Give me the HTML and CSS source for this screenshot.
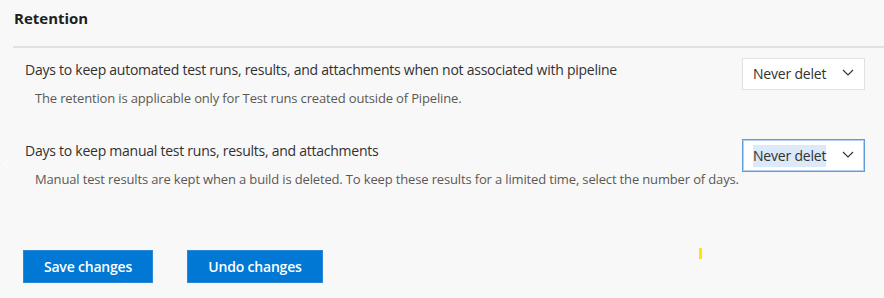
FILE: index.html
```html
<!DOCTYPE html>
<html lang="en">

<head>
    <meta charset="UTF-8">
    <meta name="viewport" content="width=device-width, initial-scale=1.0">
    <title>Retention</title>
    <link rel="stylesheet" href="styles.css">
</head>

<body>
    <div class="page">
        <span class="side-arrow">
            <svg width="8" height="14" viewBox="0 0 8 14"><polyline points="7,1 1,7 7,13" fill="none" stroke="#ffffff" stroke-width="1.3"/></svg>
        </span>

        <div class="section">
            <h2 class="section-title">Retention</h2>

            <div class="setting">
                <div class="setting-text">
                    <div class="setting-label">Days to keep automated test runs, results, and attachments when not associated with pipeline</div>
                    <div class="setting-desc">The retention is applicable only for Test runs created outside of Pipeline.</div>
                </div>
                <div class="dropdown">
                    <span class="dropdown-value">Never delet</span>
                    <svg class="chevron" width="12" height="7" viewBox="0 0 12 7"><polyline points="1,1 6,6 11,1" fill="none" stroke="#323130" stroke-width="1.1"/></svg>
                </div>
            </div>

            <div class="setting">
                <div class="setting-text">
                    <div class="setting-label">Days to keep manual test runs, results, and attachments</div>
                    <div class="setting-desc">Manual test results are kept when a build is deleted. To keep these results for a limited time, select the number of days.</div>
                </div>
                <div class="dropdown focused">
                    <span class="dropdown-value">Never delet</span>
                    <svg class="chevron" width="12" height="7" viewBox="0 0 12 7"><polyline points="1,1 6,6 11,1" fill="none" stroke="#323130" stroke-width="1.1"/></svg>
                </div>
            </div>

            <div class="actions">
                <button class="btn">Save changes</button>
                <button class="btn btn-undo">Undo changes</button>
            </div>
        </div>

        <span class="cursor-mark"></span>
    </div>
</body>

</html>
```

FILE: styles.css
```css
body {
    margin: 0;
    background-color: #f8f8f8;
    font-family: "Open Sans", "Noto Sans", sans-serif;
    color: #323130;
}

.page {
    position: relative;
    width: 884px;
    height: 298px;
    overflow: hidden;
}

.section {
    padding-left: 13px;
}

.section-title {
    margin: 0;
    height: 48px;
    box-sizing: border-box;
    padding: 7px 0 0 1px;
    font-size: 15px;
    line-height: 22px;
    font-weight: 700;
    color: #201f1e;
    border-bottom: 2px solid #e1e1e1;
}

.setting {
    display: flex;
    justify-content: space-between;
    align-items: flex-start;
    padding: 10px 19px 0 12px;
    margin-bottom: 22px;
}

.setting-text {
    padding-top: 2px;
}

.setting-label {
    font-size: 14px;
    line-height: 20px;
    letter-spacing: -0.25px;
}

.setting-desc {
    margin-top: 9px;
    padding-left: 10px;
    font-size: 13px;
    line-height: 18px;
    color: #5a5856;
    letter-spacing: -0.15px;
}

.dropdown {
    display: flex;
    align-items: center;
    justify-content: space-between;
    box-sizing: border-box;
    width: 123px;
    height: 32px;
    padding: 0 10px 0 10px;
    background-color: #fff;
    border: 1px solid #e1e1e1;
    flex-shrink: 0;
}

.dropdown-value {
    font-size: 14px;
    line-height: 22px;
    letter-spacing: -0.2px;
}

.dropdown.focused {
    height: 33px;
    border-color: #5f9cdc;
    box-shadow: inset 0 0 0 1px #b3d0f0;
}

.dropdown.focused .dropdown-value {
    background-color: #dbe9f8;
}

.chevron {
    margin-top: -3px;
}

.actions {
    display: flex;
    gap: 34px;
    padding-left: 10px;
    margin-top: 62px;
}

.btn {
    width: 130px;
    height: 33px;
    border: 1px solid #2b88d8;
    background-color: #0078d4;
    color: #fff;
    font-family: inherit;
    font-size: 14px;
    font-weight: 600;
    letter-spacing: -0.2px;
    padding: 0;
}

.btn-undo {
    width: 136px;
}

.side-arrow {
    position: absolute;
    left: 3px;
    top: 154px;
    opacity: 0.8;
}

.cursor-mark {
    position: absolute;
    left: 699px;
    top: 248px;
    width: 3px;
    height: 11px;
    background-color: #ffe600;
}
```
